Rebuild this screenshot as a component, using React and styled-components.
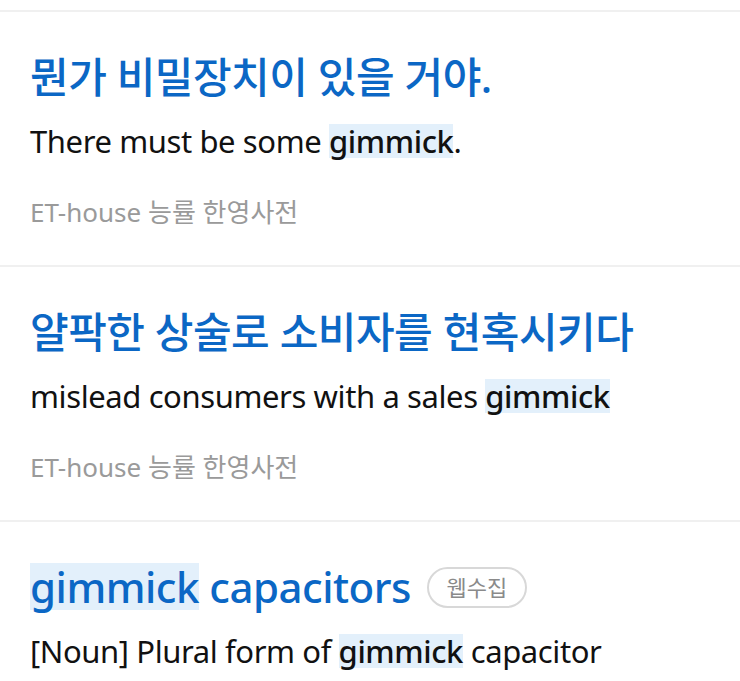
import React from 'react';
import styled, { createGlobalStyle } from "styled-components";

const GlobalStyle = createGlobalStyle`
    body {
        margin: 0;
        background: #ffffff;
        font-family: "Noto Sans", "Noto Sans CJK KR", sans-serif;
    }
`

const entries = [
    {
        title: [{ text: "뭔가 비밀장치이 있을 거야." }],
        example: [{ text: "There must be some " }, { text: "gimmick", mark: true }, { text: "." }],
        source: "ET-house 능률 한영사전",
    },
    {
        title: [{ text: "얄팍한 상술로 소비자를 현혹시키다" }],
        example: [{ text: "mislead consumers with a sales " }, { text: "gimmick", mark: true }],
        source: "ET-house 능률 한영사전",
    },
    {
        title: [{ text: "gimmick", mark: true }, { text: " capacitors" }],
        badge: "웹수집",
        example: [{ text: "[Noun] Plural form of " }, { text: "gimmick", mark: true }, { text: " capacitor" }],
    },
];

const renderParts = (parts, inTitle) =>
    parts.map((p, i) => p.mark
        ? <Mark key={i} $title={inTitle}>{p.text}</Mark>
        : <span key={i}>{p.text}</span>);

const App = () => {
    return (
        <Page>
            <GlobalStyle />
            {entries.map((e, i) => (
                <Entry key={i}>
                    <Title>
                        <span>{renderParts(e.title, true)}</span>
                        {e.badge && <Badge>{e.badge}</Badge>}
                    </Title>
                    <Example>{renderParts(e.example, false)}</Example>
                    {e.source && <Source>{e.source}</Source>}
                </Entry>
            ))}
        </Page>
    )
}

const Page = styled.div`
    padding-top: 10px;
    height: 681px;
    overflow: hidden;
    box-sizing: border-box;
`

const Entry = styled.div`
    border-top: 2px solid #f0f0f0;
    padding: 40px 30px 0;
    height: 255px;
    box-sizing: border-box;
`

const Title = styled.div`
    display: flex;
    align-items: center;
    height: 50px;
    font-size: 42px;
    line-height: 50px;
    font-weight: 500;
    letter-spacing: -0.5px;
    color: #0b67c5;
    white-space: pre;
`

const Mark = styled.span`
    display: inline-block;
    background: #e3f0fb;
    line-height: ${p => p.$title ? "47px" : "34px"};
    font-weight: 500;
`

const Badge = styled.span`
    margin-left: 16px;
    display: inline-flex;
    align-items: center;
    justify-content: center;
    width: 100px;
    height: 41px;
    box-sizing: border-box;
    border: 2px solid #d8d8d8;
    border-radius: 21px;
    font-size: 22px;
    font-weight: 400;
    letter-spacing: 0;
    color: #8a8a8a;
`

const Example = styled.div`
    margin-top: 19px;
    height: 40px;
    font-size: 31px;
    line-height: 40px;
    letter-spacing: -0.4px;
    color: #111111;
    white-space: pre;
`

const Source = styled.div`
    margin-top: 34px;
    font-size: 26px;
    line-height: 34px;
    color: #9a9a9a;
`

export default App;
